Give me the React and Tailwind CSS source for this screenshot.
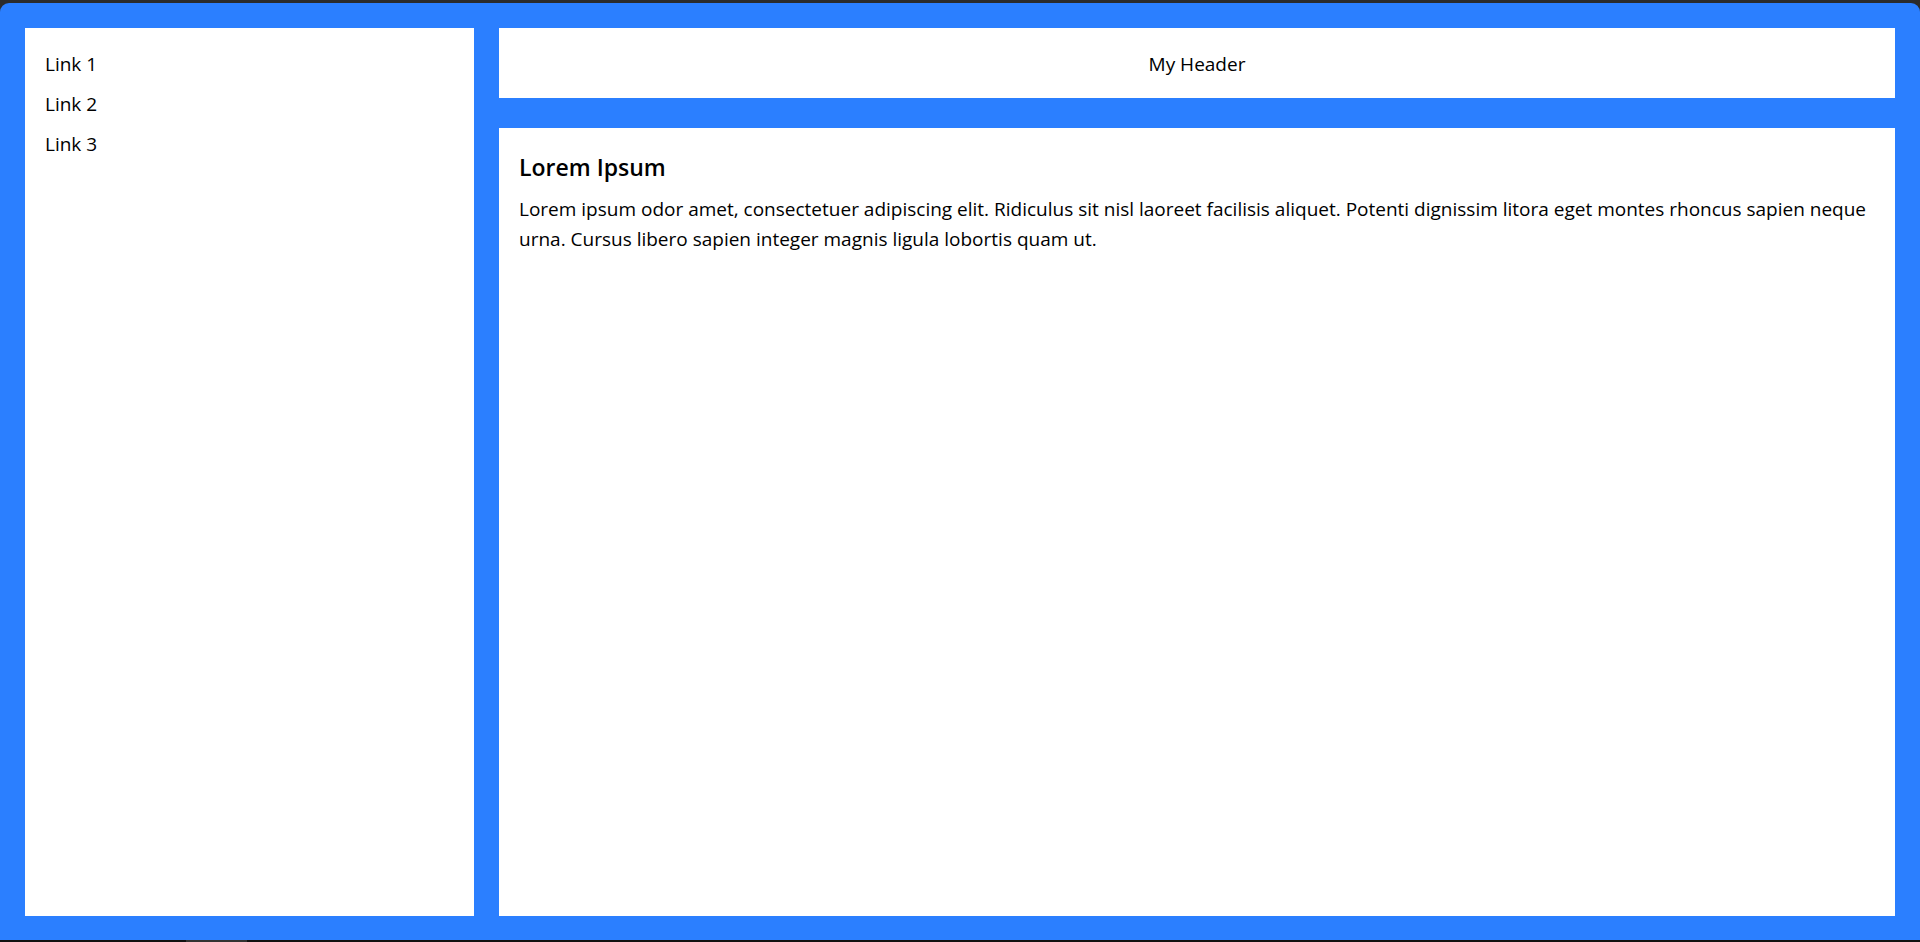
export default function App() {
  return (
    <div className="w-[1920px] h-[942px] bg-[#111111] flex flex-col overflow-hidden" style={{ fontFamily: '"Open Sans", "Noto Sans", sans-serif' }}>
      <div className="bg-[#2b2b2b] pt-[3px]">
        <div className="h-[937px] bg-[#2b7fff] rounded-t-[9px] pt-[25px] px-[25px] pb-[24px] flex gap-[25px]">
          <aside className="w-[449px] bg-white px-[20px] pt-[16px] text-black text-[19px]">
            <ul className="flex flex-col">
              <li className="leading-[40px]">Link 1</li>
              <li className="leading-[40px]">Link 2</li>
              <li className="leading-[40px]">Link 3</li>
            </ul>
          </aside>
          <div className="flex-1 flex flex-col gap-[30px]">
            <header className="h-[70px] bg-white flex items-center justify-center text-[19px] text-black pt-[2px]">
              My Header
            </header>
            <main className="flex-1 bg-white px-[20px] pt-[21px] text-black">
              <h2 className="text-[23px] font-semibold leading-[36px] mb-[8px]">Lorem Ipsum</h2>
              <p className="text-[19px] leading-[30px] pt-[1px]">
                Lorem ipsum odor amet, consectetuer adipiscing elit. Ridiculus sit nisl laoreet facilisis aliquet. Potenti dignissim litora eget montes rhoncus sapien neque urna. Cursus libero sapien integer magnis ligula lobortis quam ut.
              </p>
            </main>
          </div>
        </div>
      </div>
      <div className="h-[2px] flex">
        <div className="w-[186px]" />
        <div className="w-[61px] bg-[#333333]" />
      </div>
    </div>
  );
}
